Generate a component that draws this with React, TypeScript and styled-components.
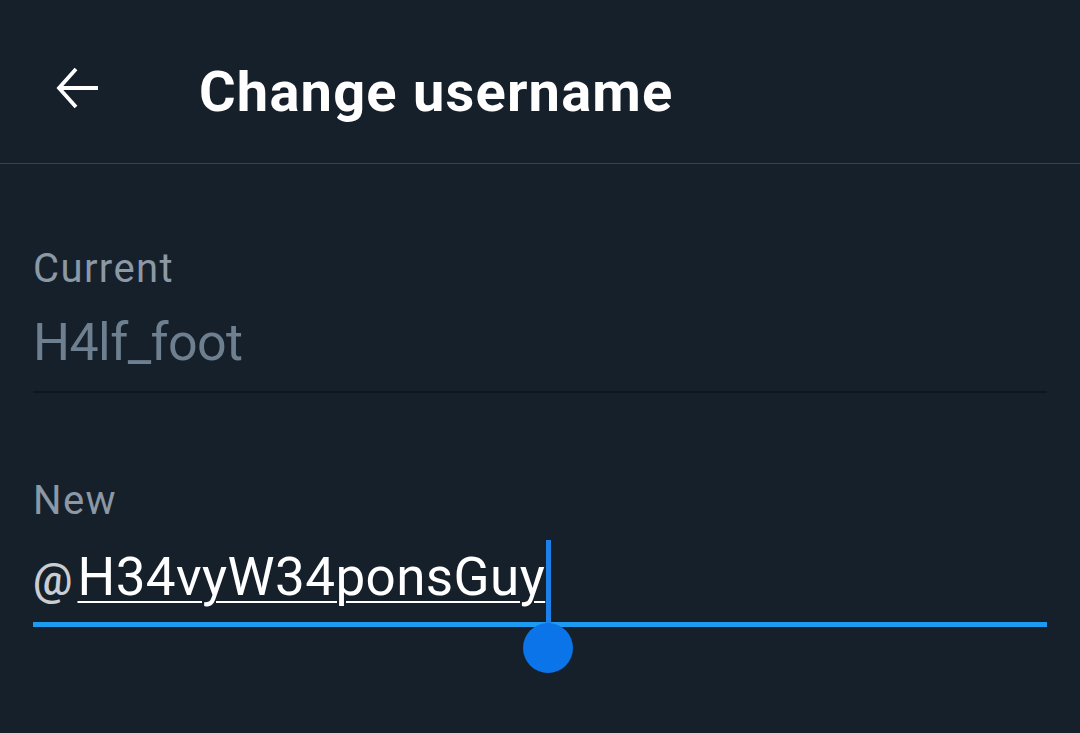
import React from 'react';
import styled, { createGlobalStyle } from 'styled-components';

const GlobalStyle = createGlobalStyle`
  html, body {
    margin: 0;
    padding: 0;
    background: #16202a;
  }
  body {
    font-family: Roboto, 'Noto Sans', sans-serif;
  }
`;

const Screen = styled.div`
  width: 1080px;
  height: 733px;
  background: #16202a;
  overflow: hidden;
`;

const Header = styled.header`
  display: flex;
  align-items: center;
  height: 164px;
  box-sizing: border-box;
  padding: 20px 0 0 53px;
  border-bottom: 1px solid #38444d;
`;

const BackButton = styled.button`
  display: flex;
  align-items: center;
  justify-content: center;
  width: 50px;
  height: 50px;
  padding: 0;
  margin: 0 96px 8px 0;
  background: transparent;
  border: none;
  color: #ffffff;
`;

const Title = styled.h1`
  margin: 0;
  color: #ffffff;
  font-size: 56px;
  font-weight: 700;
  letter-spacing: 1.2px;
`;

const Form = styled.div`
  padding: 81px 33px 0;
`;

const Field = styled.div<{ $gap?: number }>`
  margin-bottom: ${(p) => p.$gap ?? 0}px;
`;

const Label = styled.div`
  color: #8b98a5;
  font-size: 40px;
  line-height: 48px;
  letter-spacing: 1.4px;
`;

const ValueRow = styled.div<{ $active?: boolean }>`
  display: flex;
  align-items: baseline;
  padding-top: ${(p) => (p.$active ? 22 : 20)}px;
  padding-bottom: ${(p) => (p.$active ? 12 : 18)}px;
  border-bottom: ${(p) => (p.$active ? '5px solid #1d9bf0' : '2px solid #0f161e')};
`;

const OldValue = styled.span`
  color: #6e7f8f;
  font-size: 52px;
  line-height: 60px;
  letter-spacing: -0.6px;
`;

const At = styled.span`
  color: #c9ced3;
  font-size: 44px;
  line-height: 60px;
  font-weight: 500;
  margin-right: 5px;
`;

const NewValue = styled.span`
  position: relative;
  display: inline-block;
  color: #ffffff;
  font-size: 53px;
  line-height: 60px;
  letter-spacing: 0.4px;
  text-decoration: underline;
  text-decoration-thickness: 2px;
  text-underline-offset: 6px;
`;

const Caret = styled.span`
  position: absolute;
  right: -6px;
  top: -7px;
  width: 5px;
  height: 84px;
  background: #1d7fe8;
`;

const Handle = styled.span`
  position: absolute;
  right: -28px;
  top: 76px;
  width: 50px;
  height: 50px;
  border-radius: 50%;
  background: #0b74e8;
`;

const ArrowIcon = () => (
  <svg width="48" height="48" viewBox="0 0 24 24" fill="none" stroke="currentColor" strokeWidth="1.9">
    <path d="M22 12H2.5" />
    <path d="M11 2.5 2.5 12 11 21.5" strokeLinejoin="miter" />
  </svg>
);

const App = () => {
  return (
    <>
      <GlobalStyle />
      <Screen>
        <Header>
          <BackButton type="button" aria-label="Back">
            <ArrowIcon />
          </BackButton>
          <Title>Change username</Title>
        </Header>
        <Form>
          <Field $gap={84}>
            <Label>Current</Label>
            <ValueRow>
              <OldValue>H4lf_foot</OldValue>
            </ValueRow>
          </Field>
          <Field>
            <Label>New</Label>
            <ValueRow $active>
              <At>@</At>
              <NewValue>
                H34vyW34ponsGuy
                <Caret />
                <Handle />
              </NewValue>
            </ValueRow>
          </Field>
        </Form>
      </Screen>
    </>
  );
};

export default App;
